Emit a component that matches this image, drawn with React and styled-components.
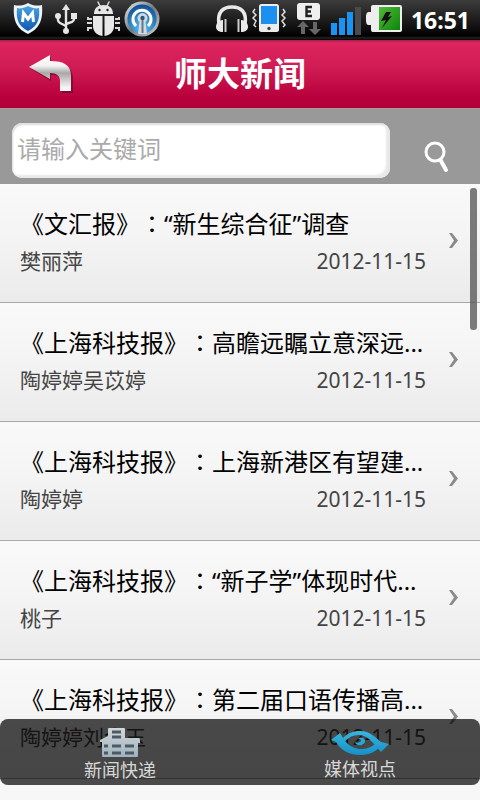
import React, {useState} from 'react';
import styled, {createGlobalStyle} from 'styled-components';

const newsList = [
    {id: 1, source: '《文汇报》', title: '“新生综合征”调查', author: '樊丽萍', date: '2012-11-15'},
    {id: 2, source: '《上海科技报》', title: '高瞻远瞩立意深远...', author: '陶婷婷吴苡婷', date: '2012-11-15'},
    {id: 3, source: '《上海科技报》', title: '上海新港区有望建...', author: '陶婷婷', date: '2012-11-15'},
    {id: 4, source: '《上海科技报》', title: '“新子学”体现时代...', author: '桃子', date: '2012-11-15'},
    {id: 5, source: '《上海科技报》', title: '第二届口语传播高...', author: '陶婷婷刘金玉', date: '2012-11-15'},
];

const ShieldIcon = () => (
    <svg width="40" height="40" viewBox="8 0 40 40" aria-hidden="true">
        <defs>
            <linearGradient id="shield" x1="0" y1="0" x2="0" y2="1">
                <stop offset="0" stopColor="#4aa3e0"/>
                <stop offset="1" stopColor="#0d57b0"/>
            </linearGradient>
        </defs>
        <path d="M28 3C23 6 18 6 14 5C13 18 15 28 28 34C41 28 43 18 42 5C38 6 33 6 28 3Z" fill="#eef3f8"/>
        <path d="M28 6C24 8 20 9 17 8C16 19 18 26 28 31C38 26 40 19 39 8C36 9 32 8 28 6Z" fill="url(#shield)"/>
        <path d="M22.500 22L23.500 13L28 19L32.500 13L33.500 22" fill="none" stroke="#fff" strokeWidth="3"/>
    </svg>
);

const UsbIcon = () => (
    <svg width="36" height="40" viewBox="48 0 36 40" aria-hidden="true">
        <g fill="none" stroke="#e6e6e6" strokeWidth="2.4">
            <path d="M66 9V30"/>
            <path d="M58 17V20Q58 22 60 23L66 26"/>
            <path d="M74 15V19Q74 21 72 22L66 24"/>
        </g>
        <path d="M66 4L70 10H62Z" fill="#e6e6e6"/>
        <circle cx="66" cy="31" r="3" fill="#e6e6e6"/>
        <circle cx="58" cy="16" r="3" fill="#e6e6e6"/>
        <rect x="71" y="13" width="6" height="6" fill="#e6e6e6"/>
    </svg>
);

const BugIcon = () => (
    <svg width="38" height="40" viewBox="84 0 38 40" aria-hidden="true">
        <g fill="#e8e8e8">
            <path d="M94 14C94 8 98 5 103.500 5S113 8 113 14Z"/>
            <path d="M93 16H102.500V36C96 35 93 31 93 26Z"/>
            <path d="M104.500 16H114V26C114 31 111 35 104.500 36Z"/>
        </g>
        <path d="M98 2L100 6M109 2L107 6" stroke="#e8e8e8" strokeWidth="1.4" strokeLinecap="round"/>
        <path d="M92 19H88V17M92 23H87M92 28H88V31M115 19H119V17M115 23H120M115 28H119V31" fill="none" stroke="#d8d8d8" strokeWidth="2"/>
        <circle cx="99.500" cy="10" r="1.200" fill="#222"/>
        <circle cx="107.500" cy="10" r="1.200" fill="#222"/>
    </svg>
);

const HotspotIcon = () => (
    <svg width="40" height="40" viewBox="122 0 40 40" aria-hidden="true">
        <defs>
            <linearGradient id="ring" x1="0" y1="0" x2="1" y2="1">
                <stop offset="0" stopColor="#f4f4f4"/>
                <stop offset="0.500" stopColor="#6f7880"/>
                <stop offset="1" stopColor="#d8d8d8"/>
            </linearGradient>
            <radialGradient id="disc" cx="0.500" cy="0.800" r="0.800">
                <stop offset="0" stopColor="#5cc4f4"/>
                <stop offset="1" stopColor="#0a4c94"/>
            </radialGradient>
        </defs>
        <circle cx="142" cy="19" r="17.500" fill="url(#ring)"/>
        <circle cx="142" cy="19" r="14.500" fill="url(#disc)"/>
        <path d="M136 26A9 9 0 1 1 148 26" fill="none" stroke="#fff" strokeWidth="3"/>
        <path d="M139.500 22A5 5 0 1 1 145.500 22L147 34H138Z" fill="#d3dae0"/>
        <circle cx="142.500" cy="18" r="2.200" fill="#2d5878"/>
        <path d="M142.500 20V33" stroke="#64788a" strokeWidth="2"/>
    </svg>
);

const HeadphoneIcon = () => (
    <svg width="36" height="40" viewBox="214 0 36 40" aria-hidden="true">
        <path d="M219 24C217 12 223 7 232 7S247 12 245 24" fill="none" stroke="#e9e9e9" strokeWidth="3.500"/>
        <path d="M223 20C218 20 216 24 216 27C216 30 219 32 223 32Z" fill="#e9e9e9"/>
        <path d="M241 20C246 20 248 24 248 27C248 30 245 32 241 32Z" fill="#e9e9e9"/>
        <path d="M225.500 19V32M238.500 19V32" stroke="#ccc" strokeWidth="2"/>
    </svg>
);

const VibrateIcon = () => (
    <svg width="40" height="40" viewBox="250 0 40 40" aria-hidden="true">
        <rect x="259" y="4" width="20" height="28" rx="2.500" fill="#ececec"/>
        <rect x="261" y="6" width="16" height="18" fill="#1c8ff0"/>
        <circle cx="269" cy="28.500" r="1.700" fill="#444"/>
        <path d="M255 9L253 12L256 15L253 18L256 21L254 25L256 27M283 9L285 12L282 15L285 18L282 21L285 25L283 27" fill="none" stroke="#ddd" strokeWidth="1.500"/>
    </svg>
);

const EdgeIcon = () => (
    <svg width="36" height="40" viewBox="290 0 36 40" aria-hidden="true">
        <rect x="297" y="3" width="23" height="17" rx="3" fill="#efefef"/>
        <path d="M312 7H306.500V16H312M306.500 11.500H311" fill="none" stroke="#222" strokeWidth="2.400"/>
        <path d="M303 21L309 27H305V34H301V27H297Z" fill="#666"/>
        <path d="M315 35L309 29H313V22H317V29H321Z" fill="#666"/>
    </svg>
);

const SignalIcon = () => (
    <svg width="38" height="40" viewBox="326 0 38 40" aria-hidden="true">
        <rect x="331" y="23" width="6" height="12" fill="#1795f5"/>
        <rect x="339" y="18" width="6" height="17" fill="#1795f5"/>
        <rect x="347" y="12" width="6" height="23" fill="#1795f5"/>
        <rect x="355" y="7" width="6" height="28" fill="#4a4a4a"/>
    </svg>
);

const BatteryIcon = () => (
    <svg width="40" height="40" viewBox="364 0 40 40" aria-hidden="true">
        <defs>
            <linearGradient id="charge" x1="0" y1="0" x2="1" y2="1">
                <stop offset="0" stopColor="#55b83a"/>
                <stop offset="1" stopColor="#0a8708"/>
            </linearGradient>
        </defs>
        <path d="M373 5H400Q402 5 402 7V30Q402 32 400 32H373Q371 32 371 30V25H368Q366 24 366 21V16Q366 13 368 12H371V7Q371 5 373 5Z" fill="#eee"/>
        <rect x="379" y="7" width="21" height="23" fill="url(#charge)"/>
        <path d="M386 12H391L388 17L392 16L382 28L386 20L381 21Z" fill="#111"/>
    </svg>
);

const BackIcon = () => (
    <svg width="48" height="40" viewBox="0 0 48 40" aria-hidden="true">
        <defs>
            <linearGradient id="silver" x1="0" y1="0" x2="0" y2="1">
                <stop offset="0" stopColor="#fff"/>
                <stop offset="0.300" stopColor="#f2f2f2"/>
                <stop offset="0.500" stopColor="#a8a8a8"/>
                <stop offset="0.900" stopColor="#f4f4f4"/>
            </linearGradient>
        </defs>
        <path d="M3 15L23 27V21C30 21 34 23 34 28V39H45V24C45 14 37 8 23 8V3Z" fill="#5c0a28" opacity="0.600"/>
        <path d="M1 13L22 1V7C36 7 43 11 43 22V37H32V27C32 22 29 19 22 19V25Z" fill="url(#silver)"/>
    </svg>
);

const SearchIcon = () => (
    <svg width="28" height="36" viewBox="0 0 28 36" aria-hidden="true">
        <circle cx="13" cy="12" r="9" fill="none" stroke="#fff" strokeWidth="3"/>
        <path d="M19 21L24 30" stroke="#fff" strokeWidth="4" strokeLinecap="round"/>
    </svg>
);

const ChevronIcon = () => (
    <svg width="10" height="18" viewBox="0 0 10 18" aria-hidden="true">
        <path d="M0 0H3L9 7.500L3 15H0L5 7.500Z" fill="#8a8a8a"/>
    </svg>
);

const BuildingIcon = () => (
    <svg width="42" height="30" viewBox="0 0 42 30" aria-hidden="true">
        <defs>
            <linearGradient id="wall" x1="0" y1="0" x2="0" y2="1">
                <stop offset="0" stopColor="#d3d7d9"/>
                <stop offset="1" stopColor="#9fb2be"/>
            </linearGradient>
        </defs>
        <path d="M9 1Q9 0 10 0H25Q26 0 26 1V10H40Q41 10 41 12V15H39V28Q39 29 38 29H4Q3 29 3 28V14H1V12L9 8Z" fill="url(#wall)"/>
        <path d="M13 4H22M13 9H22M13 18H22M13 25H22M26 18H35M26 25H35M5 18H9M5 25H9" stroke="#4b5a64" strokeWidth="3"/>
    </svg>
);

const EyeIcon = () => (
    <svg width="58" height="28" viewBox="0 -3 58 28" aria-hidden="true">
        <defs>
            <linearGradient id="eye" x1="0" y1="0" x2="0" y2="1">
                <stop offset="0" stopColor="#38b6df"/>
                <stop offset="1" stopColor="#168fc8"/>
            </linearGradient>
        </defs>
        <path d="M0 9L9 2L12 7C17 2 22 0 29 0C40 0 46 8 50 11L58 13L50 21C43 14 38 4 28 4C20 4 17 8 14 10C19 16 25 18 30 18C36 18 41 16 45 12L49 16C43 22 37 24 29 24C17 24 9 18 5 11Z" fill="url(#eye)"/>
        <path d="M24 11C25 16 34 15 34 10C34 6 28 6 27 8C29 8 31 9 30 10C29 12 26 12 24 11Z" fill="#2aa6d6"/>
    </svg>
);

const NewsItem = ({source, title, author, date}) => {
    return <Item>
            <ItemLink href="#">
                <ItemBody>
                    <ItemTitle>{source}<Colon>：</Colon>{title}</ItemTitle>
                    <ItemMeta>
                        <span>{author}</span>
                        <time>{date}</time>
                    </ItemMeta>
                </ItemBody>
                <ChevronIcon/>
            </ItemLink>
        </Item>;
};

const App = () => {
    const [keyword, setKeyword] = useState('');
    const [tab, setTab] = useState('media');
    return <Screen>
            <GlobalStyle/>
            <StatusBar>
                <StatusGroup><ShieldIcon/><UsbIcon/><BugIcon/><HotspotIcon/></StatusGroup>
                <StatusGroup>
                    <HeadphoneIcon/><VibrateIcon/><EdgeIcon/><SignalIcon/><BatteryIcon/>
                    <Clock>16:51</Clock>
                </StatusGroup>
            </StatusBar>
            <Header>
                <BackButton type="button" aria-label="返回"><BackIcon/></BackButton>
                <h1>师大新闻</h1>
            </Header>
            <SearchForm onSubmit={e=>e.preventDefault()}>
                <SearchInput
                    type="text"
                    aria-label="请输入关键词"
                    placeholder="请输入关键词"
                    value={keyword}
                    onChange={e=>setKeyword(e.target.value)}
                />
                <SearchButton type="submit" aria-label="搜索"><SearchIcon/></SearchButton>
            </SearchForm>
            <Content>
                <List>
                    {newsList.map(news=><NewsItem key={news.id} {...news}/>)}
                </List>
                <ScrollThumb/>
            </Content>
            <TabBar>
                <TabButton type="button" aria-pressed={tab === 'news'} onClick={_=>setTab('news')}>
                    <BuildingIcon/>新闻快递
                </TabButton>
                <TabButton type="button" aria-pressed={tab === 'media'} onClick={_=>setTab('media')}>
                    <EyeIcon/>媒体视点
                </TabButton>
            </TabBar>
        </Screen>;
};

export default App;

const GlobalStyle = createGlobalStyle`
    * {
        box-sizing: border-box;
    }
    body {
        margin: 0;
    }
    body, button, input {
        font-family: "Noto Sans", "Noto Sans CJK SC", sans-serif;
    }
    button {
        padding: 0;
        border: 0;
        background: none;
        cursor: pointer;
    }
    svg {
        display: block;
        flex: none;
    }
`;

const Screen = styled.div`
    position: relative;
    display: flex;
    flex-direction: column;
    height: 100vh;
    overflow: hidden;
    background: #f7f7f7;
`;

const StatusBar = styled.div`
    display: flex;
    justify-content: space-between;
    height: 40px;
    padding: 0 10px 0 8px;
    background: linear-gradient(#3c3c3c, #0c0c0c 75%, #000 90%, #222 95%, #000);
`;

const StatusGroup = styled.div`
    display: flex;
    align-items: center;
`;

const Clock = styled.time`
    margin-left: 7px;
    color: #fff;
    font-size: 23px;
    font-weight: 700;
    line-height: 38px;
`;

const Header = styled.header`
    display: grid;
    grid-template-columns: 80px 1fr 80px;
    align-items: center;
    height: 68px;
    background: linear-gradient(#a81c4a, #dd255f 4%, #d01c55 40%, #b8003c 85%, #b0003a);
    h1 {
        margin: 0;
        color: #fff;
        font-size: 33px;
        font-weight: 700;
        line-height: 40px;
        text-align: center;
    }
`;

const BackButton = styled.button`
    justify-self: end;
    padding-right: 4px;
`;

const SearchForm = styled.form`
    display: flex;
    align-items: center;
    height: 76px;
    padding: 8px 30px 0 12px;
    border-top: 1px solid #b5929c;
    background: #999;
`;

const SearchInput = styled.input`
    flex: 1;
    min-width: 0;
    height: 55px;
    padding: 0 5px 4px;
    border: 0;
    border-radius: 10px;
    outline: 0;
    background: #fff;
    box-shadow: inset -4px -3px 2px #e8e8e8, inset 1px 2px 2px #ddd;
    color: #222;
    font-size: 24px;
    &::placeholder {
        color: #aaa;
        opacity: 1;
    }
`;

const SearchButton = styled.button`
    margin-left: 32px;
    padding-top: 14px;
`;

const Content = styled.main`
    position: relative;
    flex: 1;
    min-height: 0;
`;

const List = styled.ul`
    height: 100%;
    margin: 0;
    padding: 0;
    overflow-y: auto;
    list-style: none;
    scrollbar-width: none;
`;

const Item = styled.li`
    border-bottom: 1px solid #a8a8a8;
    background: linear-gradient(#f9f9f9, #f5f5f5 40%, #ebebeb);
`;

const ItemLink = styled.a`
    display: flex;
    align-items: center;
    gap: 23px;
    padding: 23px 21px 25px 20px;
    color: #000;
    text-decoration: none;
`;

const ItemBody = styled.div`
    flex: 1;
    min-width: 0;
`;

const ItemTitle = styled.div`
    font-size: 24px;
    line-height: 34px;
    white-space: nowrap;
    text-spacing-trim: space-all;
`;

// the JP face centres the full-width colon in its box
const Colon = styled.span`
    font-family: "Noto Sans CJK JP", sans-serif;
    line-height: 1;
`;

const ItemMeta = styled.div`
    display: flex;
    justify-content: space-between;
    margin-top: 4px;
    color: #444;
    font-size: 21px;
    line-height: 32px;
`;

const ScrollThumb = styled.div`
    position: absolute;
    top: 4px;
    right: 3px;
    width: 7px;
    height: 142px;
    border-radius: 3px;
    background: rgba(90, 90, 90, 0.8);
`;

const TabBar = styled.nav`
    position: absolute;
    right: 0;
    bottom: 15px;
    left: 0;
    display: flex;
    border-radius: 8px;
    background: rgba(0, 0, 0, 0.7);
`;

const TabButton = styled.button`
    display: flex;
    flex: 1;
    flex-direction: column;
    align-items: center;
    justify-content: space-between;
    height: 66px;
    padding: 9px 0 4px;
    color: #d8d8d8;
    font-size: 18px;
    line-height: 24px;
`;
